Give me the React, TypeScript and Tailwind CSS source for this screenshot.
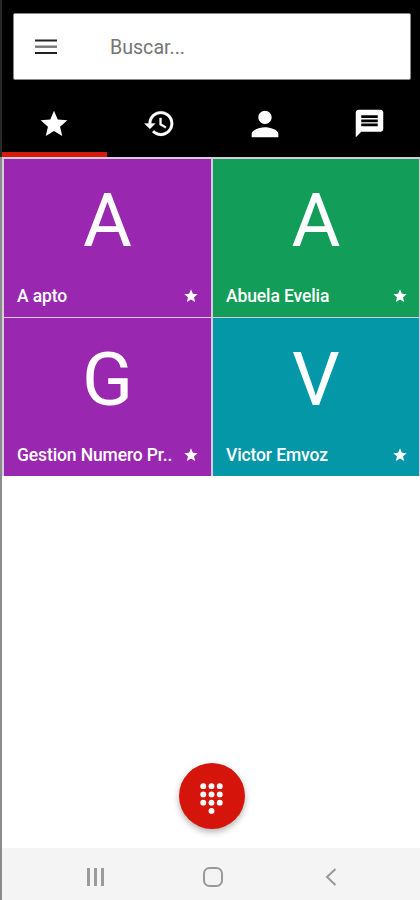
import type { ReactNode } from 'react';

const STAR = 'M12 17.27 18.18 21l-1.64-7.03L22 9.24l-7.19-.61L12 2 9.19 8.63 2 9.24l5.46 4.73L5.82 21z';

function Tab({ active, children }: { active?: boolean; children: ReactNode }) {
  return (
    <button className="relative flex h-[76px] w-[105px] shrink-0 items-center justify-center pt-[9px] text-white">
      {children}
      {active && <span className="absolute inset-x-0 bottom-0 h-[5px] bg-[#d51b0c]" />}
    </button>
  );
}

function Tile({ letter, name, color, inset }: { letter: string; name: string; color: string; inset: string }) {
  return (
    <div className={`flex h-[158px] flex-col text-white ${color}`}>
      <div className="mt-[17px] text-center text-[75px] leading-[88px]">{letter}</div>
      <div className={`mt-[21px] flex items-center justify-between pl-[13px] ${inset}`}>
        <span className="whitespace-nowrap text-[17.5px] leading-[23px] font-medium tracking-[-0.12px]">{name}</span>
        <svg viewBox="0 0 24 24" className="mb-[1px] size-[16px] shrink-0" fill="currentColor">
          <path d={STAR} />
        </svg>
      </div>
    </div>
  );
}

export default function App() {
  return (
    <div className="flex h-[900px] w-[420px] flex-col overflow-hidden bg-white font-['Roboto',sans-serif]">
      <header className="h-[157px] shrink-0 border-l-2 border-[#292929] bg-black pt-[13px]">
        <div className="mr-[9px] ml-[11px] flex h-[67px] items-center rounded-[2px] border border-[#888] bg-white">
          <svg viewBox="0 0 22 16" className="ml-[21px] h-[16px] w-[22px]">
            <path d="M0 1.5h22M0 14h22" stroke="#222" strokeWidth="2" />
            <path d="M0 7.7h22" stroke="#777" strokeWidth="2.4" />
          </svg>
          <span className="mt-[3px] ml-[53px] text-[19.6px] leading-6 text-[#757575]">Buscar...</span>
        </div>
        <nav className="mt-[1px] flex w-[418px] overflow-hidden">
          <Tab active>
            <svg viewBox="0 0 24 24" className="mr-[1px] size-[32px]" fill="currentColor">
              <path d={STAR} />
            </svg>
          </Tab>
          <Tab>
            <svg viewBox="0 0 24 24" className="size-[33px]" fill="currentColor" stroke="currentColor" strokeWidth="0.2">
              <path d="M13 3a9 9 0 0 0-9 9H1l3.89 3.89.07.14L9 12H6c0-3.87 3.13-7 7-7s7 3.13 7 7-3.13 7-7 7c-1.93 0-3.68-.79-4.94-2.06l-1.42 1.42A8.954 8.954 0 0 0 13 21a9 9 0 0 0 0-18zm-1 5v5l4.28 2.54.72-1.21-3.5-2.08V8H12z" />
            </svg>
          </Tab>
          <Tab>
            <svg viewBox="0 0 24 24" className="size-[40px]" fill="currentColor">
              <path d="M12 12c2.21 0 4-1.79 4-4s-1.79-4-4-4-4 1.79-4 4 1.79 4 4 4zm0 2c-2.67 0-8 1.34-8 4v2h16v-2c0-2.66-5.33-4-8-4z" />
            </svg>
          </Tab>
          <Tab>
            <svg viewBox="0 0 24 24" className="size-[33px]" fill="currentColor">
              <path d="M20 2H4c-1.1 0-1.99.9-1.99 2L2 22l4-4h14c1.1 0 2-.9 2-2V4c0-1.1-.9-2-2-2zM6 9h12v2H6V9zm12 5H6v-2h12v2zm0-6H6V6h12v2z" />
            </svg>
          </Tab>
        </nav>
      </header>

      <main className="flex min-h-0 flex-1 flex-col border-l-2 border-[#8c8c8c]">
        <div className="grid grid-cols-[207px_206px] gap-x-[2px] gap-y-[1px] bg-[#d6cdda] pt-[2px] pl-[2px]">
          <Tile letter="A" name="A apto" color="bg-[#9a27b0]" inset="pr-[12px]" />
          <Tile letter="A" name="Abuela Evelia" color="bg-[#129e58]" inset="pr-[11px]" />
          <Tile letter="G" name="Gestion Numero Pr.." color="bg-[#9a27b0]" inset="pr-[12px]" />
          <Tile letter="V" name="Victor Emvoz" color="bg-[#0397a7]" inset="pr-[11px]" />
        </div>

        <div className="flex flex-1 items-end justify-center pb-[19px] pl-[2px]">
          <button className="flex size-[66px] items-center justify-center rounded-full bg-[#d5150b] pt-[4px] pr-[1px] shadow-[0_3px_6px_rgba(0,0,0,0.3)]">
            <svg viewBox="0 0 24 32" className="h-[33px] w-[25px]" fill="white">
              {[4, 12, 20].map((y) => [4, 12, 20].map((x) => <circle key={`${x}-${y}`} cx={x} cy={y} r="2.85" />))}
              <circle cx="12" cy="28" r="2.85" />
            </svg>
          </button>
        </div>

        <footer className="flex h-[52px] shrink-0 items-center bg-[#f4f4f4] pt-[5px]">
          <svg viewBox="0 0 20 18" className="ml-[84px] h-[18px] w-[20px]" stroke="#9b9b9b" strokeWidth="3">
            <path d="M2.5 0v18M9.5 0v18M16.5 0v18" />
          </svg>
          <svg viewBox="0 0 20 20" className="ml-[97px] size-[20px]" fill="none" stroke="#999" strokeWidth="2">
            <rect x="1" y="1" width="18" height="18" rx="5.5" />
          </svg>
          <svg viewBox="0 0 12 18" className="ml-[102px] h-[18px] w-[12px]" fill="none" stroke="#999" strokeWidth="2">
            <path d="M10.5 1 2 9l8.5 8" />
          </svg>
        </footer>
      </main>
    </div>
  );
}
